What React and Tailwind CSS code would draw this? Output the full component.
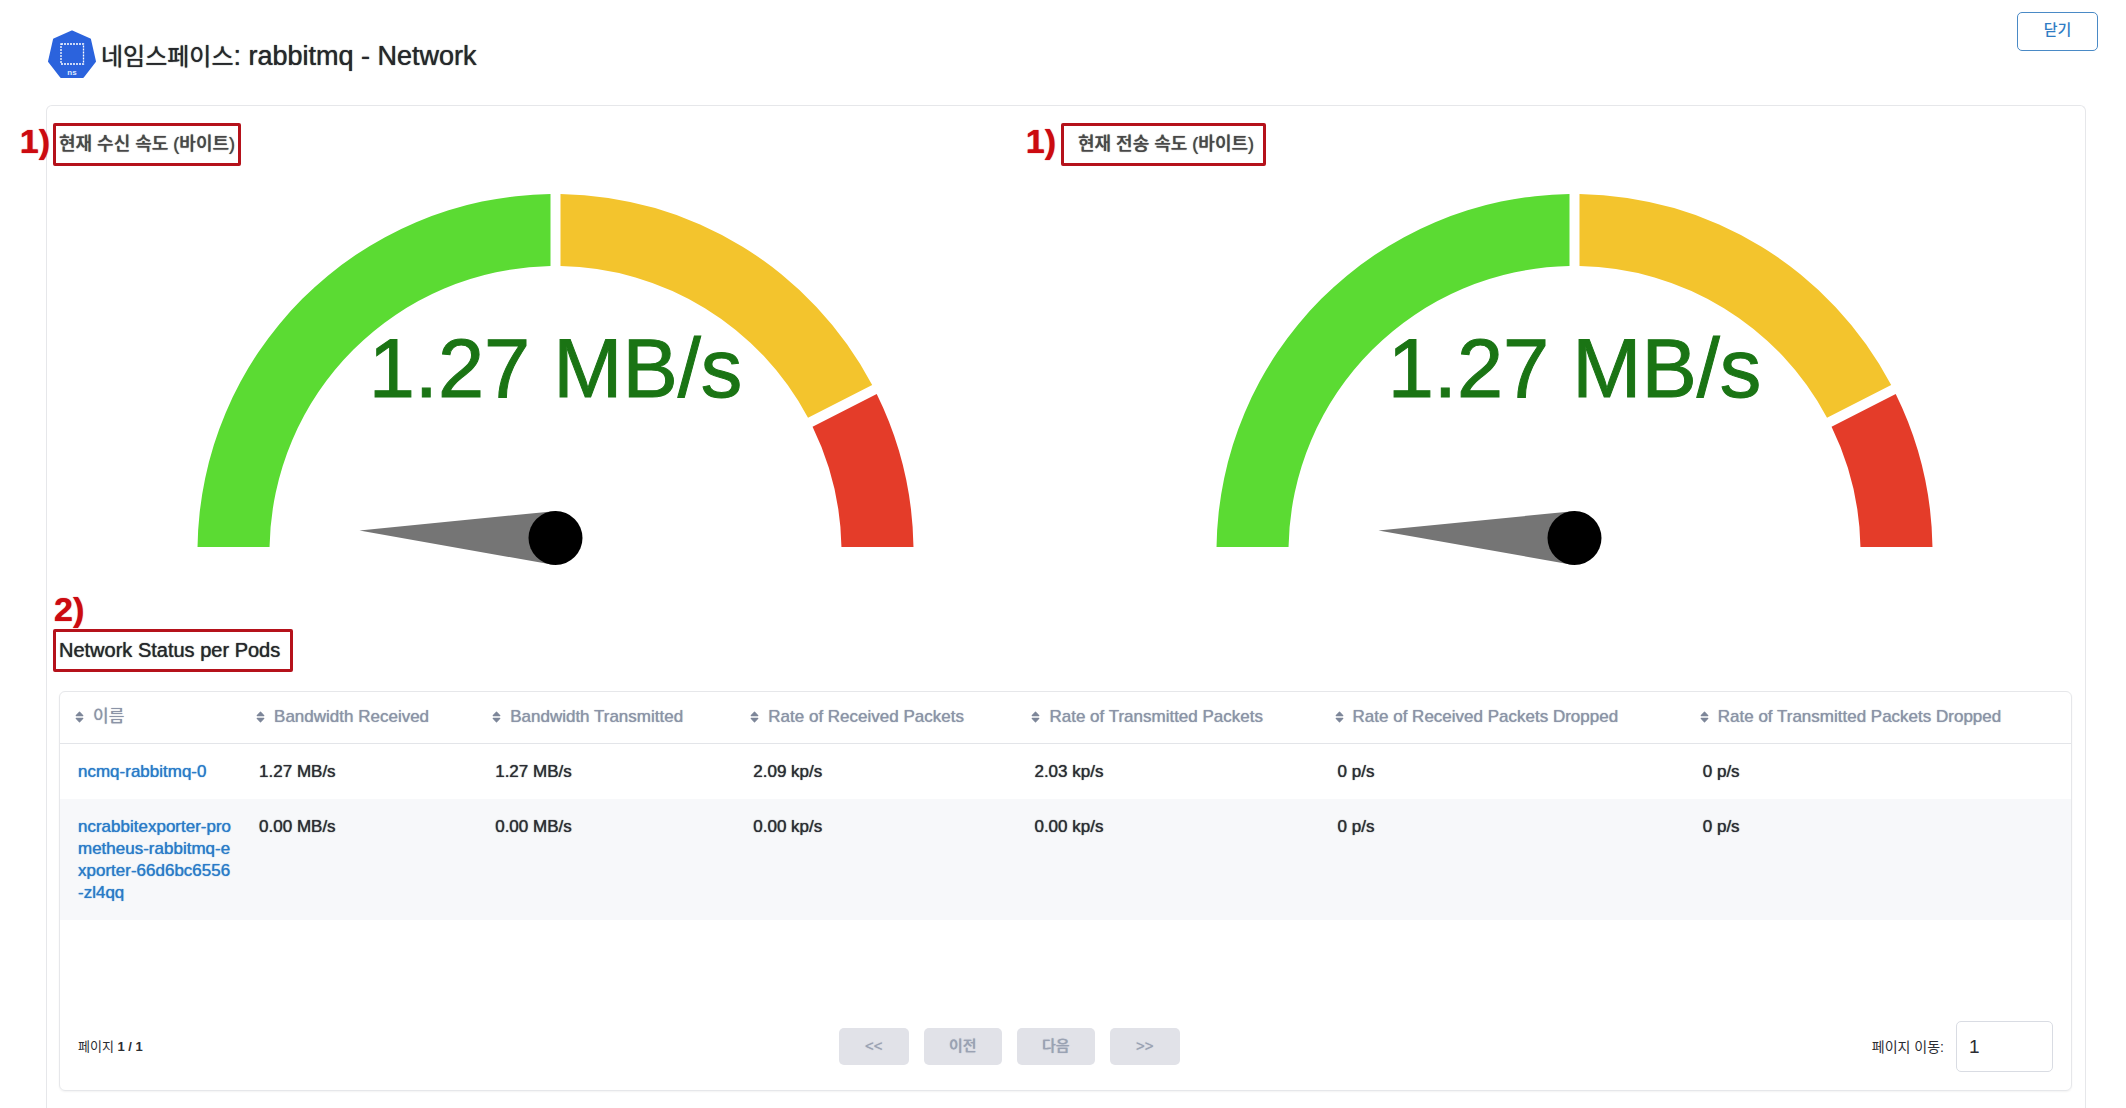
import React from "react";

const COLUMNS = [
  { label: "이름", width: "w-[181px]" },
  { label: "Bandwidth Received", width: "w-[236px]" },
  { label: "Bandwidth Transmitted", width: "w-[258px]" },
  { label: "Rate of Received Packets", width: "w-[281px]" },
  { label: "Rate of Transmitted Packets", width: "w-[303px]" },
  { label: "Rate of Received Packets Dropped", width: "w-[365px]" },
  { label: "Rate of Transmitted Packets Dropped", width: "w-[386px]" },
];

const ROWS = [
  ["ncmq-rabbitmq-0", "1.27 MB/s", "1.27 MB/s", "2.09 kp/s", "2.03 kp/s", "0 p/s", "0 p/s"],
  [
    "ncrabbitexporter-prometheus-rabbitmq-exporter-66d6bc6556-zl4qq",
    "0.00 MB/s",
    "0.00 MB/s",
    "0.00 kp/s",
    "0.00 kp/s",
    "0 p/s",
    "0 p/s",
  ],
];

function NamespaceIcon() {
  return (
    <svg viewBox="0 0 50 48" className="h-12 w-[50px]" aria-hidden="true">
      <path
        d="M25 1.5 L43 9.5 L48 31.5 L36 47 H14 L2 31.5 L7 9.5 Z"
        fill="#2b63dd"
        stroke="#2b63dd"
        strokeWidth="2"
        strokeLinejoin="round"
      />
      <rect x="14" y="14" width="22.5" height="20" fill="none" stroke="#fff" strokeWidth="1.3" strokeDasharray="2 1" />
      <text x="25" y="45" textAnchor="middle" fontSize="8" fontWeight="700" fill="#dfe8ff">
        ns
      </text>
    </svg>
  );
}

function SortIcon() {
  return (
    <svg viewBox="0 0 9 12" className="h-3 w-[9px] shrink-0" aria-hidden="true">
      <path
        d="M4.5 1.2 L7.8 4.6 H1.2 Z M4.5 10.8 L7.8 7.4 H1.2 Z"
        fill="#7d8699"
        stroke="#7d8699"
        strokeWidth="1.2"
        strokeLinejoin="round"
      />
    </svg>
  );
}

/* Red numbered frame laid over a heading. */
function Callout({ number, frame, badge }) {
  return (
    <span className={`absolute rounded-[2px] border-[3px] border-[#b5121b] ${frame}`}>
      <span className={`absolute text-[34px] leading-[34px] font-bold text-[#cc0a10] ${badge}`}>{number})</span>
    </span>
  );
}

const CX = 508.5;
const CY = 395;
const OUTER = 358;
const INNER = 286;
const PAD = 5;

/* Ring segment between two angles (degrees, 180 = left), with parallel gaps. */
function segment(from, to) {
  const point = (radius, angle, side) => {
    const a = (angle * Math.PI) / 180 + side * Math.asin(PAD / radius);
    return `${(CX + radius * Math.cos(a)).toFixed(2)} ${(CY - radius * Math.sin(a)).toFixed(2)}`;
  };
  return [
    `M${point(OUTER, from, -1)}`,
    `A${OUTER} ${OUTER} 0 0 1 ${point(OUTER, to, 1)}`,
    `L${point(INNER, to, 1)}`,
    `A${INNER} ${INNER} 0 0 0 ${point(INNER, from, -1)}Z`,
  ].join(" ");
}

function Gauge({ title, value, frame, badge }) {
  return (
    <section>
      <h2 className="relative mt-6 ml-3 inline-block h-[27px] align-top text-lg leading-7 font-medium whitespace-nowrap text-[#484848] [text-shadow:0_0_1px_currentColor]">
        {title}
        <Callout number={1} frame={frame} badge={badge} />
      </h2>
      <svg viewBox="0 0 1019 423" className="block w-full" role="img" aria-label={`${title} ${value}`}>
        <path d={segment(180, 90)} fill="#5bdb33" />
        <path d={segment(90, 27)} fill="#f3c42d" />
        <path d={segment(27, 0)} fill="#e43c29" />
        <path d="M312.5 373.5 L509.5 354 L507.5 408 Z" fill="#757575" />
        <circle cx={CX} cy="381" r="27" fill="#000" />
        <text x={CX} y="240" textAnchor="middle" fontSize="83" fill="#1a7414" stroke="#1a7414">
          {value}
        </text>
      </svg>
    </section>
  );
}

function PageButton({ children, width }) {
  return (
    <button
      type="button"
      disabled
      className={`flex h-[37px] items-center justify-center rounded-[5px] bg-[#e1e2e8] pb-0.5 text-[15px] leading-5 font-medium text-[#9aa2b3] [text-shadow:0_0_1px_currentColor] ${width}`}
    >
      {children}
    </button>
  );
}

export default function App() {
  return (
    <div className="flex min-h-screen flex-col bg-white font-['Liberation_Sans','Noto_Sans_CJK_KR',sans-serif] text-[#2b2d33]">
      <header className="flex h-[105px] items-start justify-between pt-3 pr-7 pl-[47px]">
        <div className="mt-[18px] flex items-center gap-1">
          <NamespaceIcon />
          <h1 className="pt-1 text-[27px] leading-9 text-[#26282b] [text-shadow:0_0_1px_currentColor]">
            <span className="text-2xl leading-9">네임스페이스</span>: rabbitmq - Network
          </h1>
        </div>
        <button
          type="button"
          className="h-[39px] w-[81px] rounded-[5px] border border-[#4a8ac6] pb-1 text-[15px] leading-5 font-medium text-[#2f7cc4]"
        >
          닫기
        </button>
      </header>

      <main className="mr-10 ml-[46px] flex-1 rounded-t-md border border-b-0 border-[#e6e7ea] pb-[17px]">
        <div className="grid grid-cols-2">
          <Gauge
            title="현재 수신 속도 (바이트)"
            value="1.27 MB/s"
            frame="-top-[7px] -bottom-[9px] -left-[6px] -right-[6px]"
            badge="right-full mr-[6px] -top-0.5"
          />
          <Gauge
            title="현재 전송 속도 (바이트)"
            value="1.27 MB/s"
            frame="-top-[7px] -bottom-[9px] -left-[17px] -right-[12px]"
            badge="right-full mr-[8px] -top-0.5"
          />
        </div>

        <h2 className="relative mt-14 ml-3 inline-block align-top text-xl leading-7 text-[#26282b] [text-shadow:0_0_1px_currentColor]">
          Network Status per Pods
          <Callout number={2} frame="-top-[7px] -bottom-2 -left-[6px] -right-[13px]" badge="bottom-full -left-0.5 mb-[6px]" />
        </h2>

        <div className="mt-[27px] mr-[13px] ml-3 rounded-md border border-[#e6e7ea] shadow-xs">
          <table className="w-full table-fixed border-collapse text-[17px] leading-[22px]">
            <thead>
              <tr className="border-b border-[#e3e5e9]">
                {COLUMNS.map(({ label, width }) => (
                  <th key={label} scope="col" className={`h-[51px] p-0 pl-[15px] text-left font-normal ${width}`}>
                    <button
                      type="button"
                      className="flex items-center gap-[9px] whitespace-nowrap text-[#8b94a7] [text-shadow:0_0_1px_currentColor]"
                    >
                      <SortIcon />
                      {label}
                    </button>
                  </th>
                ))}
              </tr>
            </thead>
            <tbody>
              {ROWS.map(([name, ...values]) => (
                <tr key={name} className="h-14 align-top even:bg-[#f7f8fa]">
                  <td className="pt-[17px] pr-2 pb-4 pl-[18px] break-all">
                    <a href={`#${name}`} className="text-[#2a7bc8] [text-shadow:0_0_1px_currentColor]">
                      {name}
                    </a>
                  </td>
                  {values.map((value, i) => (
                    <td key={i} className="pt-[17px] pb-4 pl-[18px] [text-shadow:0_0_1px_currentColor]">
                      {value}
                    </td>
                  ))}
                </tr>
              ))}
            </tbody>
          </table>

          <div className="flex items-center justify-between px-[18px] pt-[101px] pb-[18px]">
            <p className="text-[13px] leading-5">
              페이지 <b>1 / 1</b>
            </p>
            <nav className="ml-1 flex gap-[15px]" aria-label="페이지">
              <PageButton width="w-[70px]">&lt;&lt;</PageButton>
              <PageButton width="w-[78px]">이전</PageButton>
              <PageButton width="w-[78px]">다음</PageButton>
              <PageButton width="w-[70px]">&gt;&gt;</PageButton>
            </nav>
            <label className="flex items-center gap-3 text-sm leading-5">
              페이지 이동:
              <input
                type="text"
                defaultValue="1"
                className="h-[51px] w-[97px] rounded-[5px] border border-[#d9dce3] px-3 text-[19px] leading-6"
              />
            </label>
          </div>
        </div>
      </main>
    </div>
  );
}
